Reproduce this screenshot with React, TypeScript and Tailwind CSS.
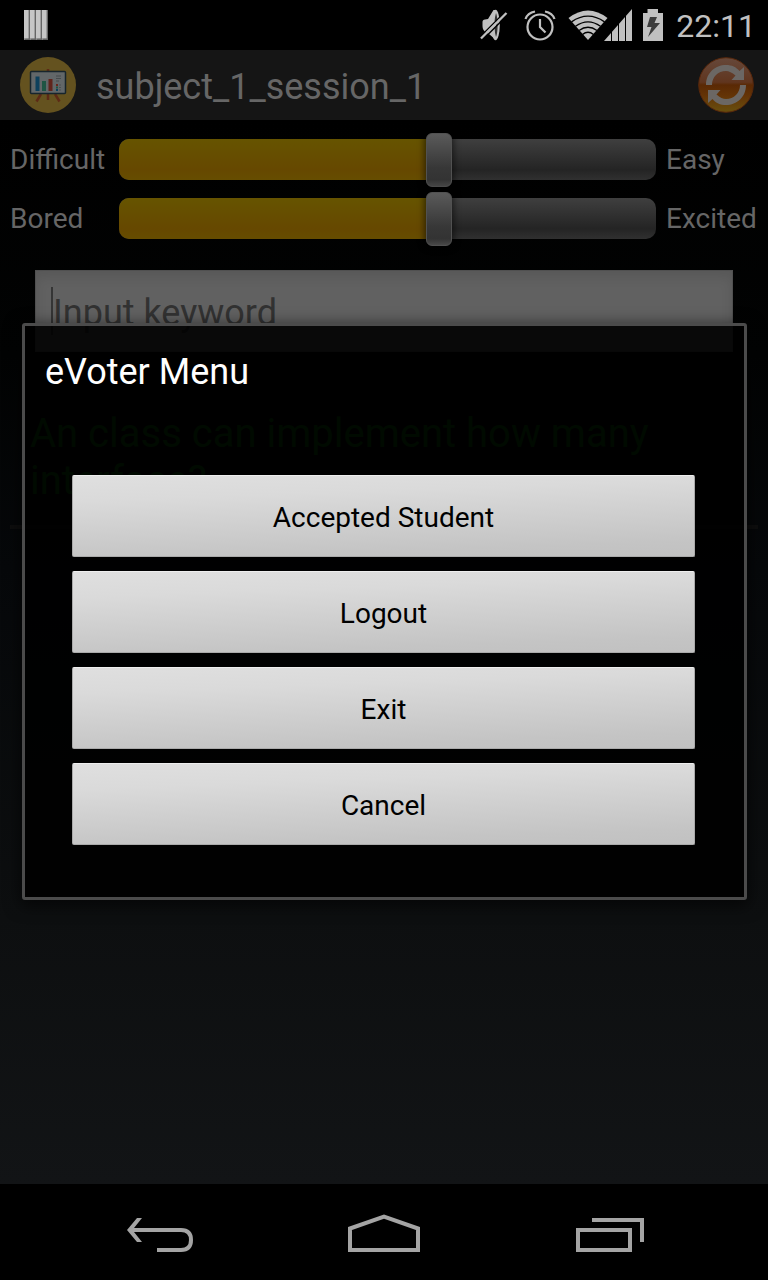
import { useState } from 'react';

function NotificationIcon() {
  return (
    <svg width="24" height="30" viewBox="0 0 24 30" aria-hidden="true">
      {[0, 6, 12, 18].map((x) => (
        <g key={x}>
          <rect x={x} y="0" width="6" height="30" fill="#666" />
          <rect x={x} y="0" width="4.6" height="28.4" fill="#c6c6c6" />
          <path d={`M${x} 30L${x + 1.5} 28.4H${x}z`} fill="#aaa" />
        </g>
      ))}
    </svg>
  );
}

function MutedIcon() {
  return (
    <svg width="28" height="34" viewBox="0 0 28 34" aria-hidden="true">
      <path d="M2.500 14Q2.500 11.500 5 11.500L8 11L13.500 2H16V32L9 26L6 24.500Q2.500 22 2.500 18z" fill="#c0c0c0" />
      <ellipse cx="15.500" cy="17" rx="4.300" ry="15.300" fill="#c0c0c0" />
      <path d="M16 5Q17.600 9 17.600 17Q17.600 25 16 29Q14.800 25 14.600 20L16 19V14L14.600 13Q14.800 9 16 5z" fill="#333" />
      <path d="M0 29L26 3" stroke="#000" strokeWidth="1.500" />
      <path d="M1 30.500L26.500 5" stroke="#c0c0c0" strokeWidth="2.400" />
      <path d="M2.500 32L28 6.500" stroke="#000" strokeWidth="1.500" />
    </svg>
  );
}

function AlarmIcon() {
  return (
    <svg width="32" height="32" viewBox="0 0 32 32" fill="none" stroke="#c0c0c0" strokeWidth="2.200" aria-hidden="true">
      <circle cx="16" cy="18" r="12.500" />
      <path d="M16 10V18L21.500 23.500M1.500 10Q3.500 4 11 2.500M30.500 10Q28.500 4 21 2.500" />
    </svg>
  );
}

function WifiIcon() {
  return (
    <svg width="40" height="32" viewBox="0 0 40 32" aria-hidden="true">
      <path d="M0.500 9Q20 -6 39.500 9L20 31z" fill="#c0c0c0" />
      <g fill="none" stroke="#000" strokeWidth="1.400">
        <path d="M3.500 12.800Q20 1.500 36.500 12.800" />
        <path d="M7.500 17.300Q20 8.500 32.500 17.300" />
        <path d="M11 21.500Q20 15 29 21.500" />
        <path d="M14.500 25.500Q20 21 25.500 25.500" />
      </g>
    </svg>
  );
}

function SignalIcon() {
  return (
    <svg width="28" height="32" viewBox="0 0 28 32" aria-hidden="true">
      <path d="M0 32L28 0V32z" fill="#c0c0c0" />
      <path d="M7.500 0V32M14.500 0V32M21.500 0V32" stroke="#000" strokeWidth="1" />
    </svg>
  );
}

function BatteryIcon() {
  return (
    <svg width="22" height="32" viewBox="0 0 22 32" aria-hidden="true">
      <path d="M5.500 0H16V4H21V32H1V4H5.500z" fill="#c0c0c0" />
      <path d="M8 8H15L12.500 14H18L6 28L9.500 18H5z" fill="#3c3c3c" />
    </svg>
  );
}

function BoardIcon() {
  return (
    <svg width="56" height="56" viewBox="0 0 56 56" aria-hidden="true">
      <circle cx="28" cy="28" r="28" fill="#64521f" />
      <path d="M28 12V15M28 37V43M21 37L16.500 44.500M35 37L39.500 44.500" stroke="#5d2a16" strokeWidth="2.500" />
      <rect x="10.500" y="14.500" width="35" height="22" rx="1" fill="#626769" stroke="#17252d" strokeWidth="1.500" />
      <path d="M17.500 34V19.500" stroke="#0d405c" strokeWidth="4" />
      <path d="M24 34V24" stroke="#1e5544" strokeWidth="4" />
      <path d="M30.500 34V22" stroke="#60251d" strokeWidth="4" />
      <path d="M36 19H41M36 21.500H41M36 24H39" stroke="#454b4d" strokeWidth="1" />
      <path d="M36 28H38" stroke="#6b251d" strokeWidth="2" />
      <path d="M36 30.500H38" stroke="#1e5544" strokeWidth="2" />
      <path d="M36 33H38" stroke="#0d405c" strokeWidth="2" />
      <path d="M39 28H41M39 30.500H41M39 33H41" stroke="#4b5052" strokeWidth="1" />
    </svg>
  );
}

function RefreshIcon() {
  return (
    <svg width="56" height="56" viewBox="0 0 56 56" aria-hidden="true">
      <defs>
        <linearGradient id="orb" x1="0" y1="0" x2="0" y2="1">
          <stop offset="0" stopColor="#66483a" />
          <stop offset="0.450" stopColor="#60351e" />
          <stop offset="0.500" stopColor="#5a2904" />
          <stop offset="0.700" stopColor="#643406" />
          <stop offset="1" stopColor="#68500e" />
        </linearGradient>
      </defs>
      <circle cx="28" cy="28" r="27.300" fill="url(#orb)" stroke="#58270b" strokeWidth="1" />
      <g fill="#6b6764">
        <path d="M8 28C8 16 17 8 28 8C34 8 38 10 41.500 14L46 10V23H33.500L37.500 18.500C34 15.500 31 14 28 14C20 14 14 20 14 28z" />
        <path d="M48 28C48 40 39 48 28 48C22 48 18 46 14.500 42L10 46V33H22.500L18.500 37.500C22 40.500 25 42 28 42C36 42 42 36 42 28z" />
      </g>
    </svg>
  );
}

function RatingSlider({ low, high }: { low: string; high: string }) {
  const [value, setValue] = useState(60);
  return (
    <div className="grid h-[59px] grid-cols-[99px_1fr_92px] items-center gap-x-[10px] text-[28px] text-[#666]">
      <span>{low}</span>
      <div className="grid items-center">
        <div className="col-start-1 row-start-1 h-[41px] overflow-hidden rounded-[10px] bg-[linear-gradient(#3f3f3f,#242424_75%,#303030)]">
          <div
            className="h-full bg-[linear-gradient(#665400,#664800_75%,#664d00)]"
            style={{ width: `${value}%` }}
          />
        </div>
        <input
          type="range"
          aria-label={`${low} to ${high}`}
          value={value}
          onChange={(e) => setValue(Number(e.target.value))}
          className="z-0 col-start-1 row-start-1 h-[54px] w-full appearance-none bg-transparent [&::-webkit-slider-thumb]:h-[54px] [&::-webkit-slider-thumb]:w-[26px] [&::-webkit-slider-thumb]:appearance-none [&::-webkit-slider-thumb]:rounded-[6px] [&::-webkit-slider-thumb]:border [&::-webkit-slider-thumb]:border-[#515151] [&::-webkit-slider-thumb]:bg-[linear-gradient(#5a5a5a,#373737_65%,#333_88%,#484848)] [&::-webkit-slider-thumb]:shadow-[0_0_6px_2px_rgba(0,0,0,0.5)]"
        />
      </div>
      <span>{high}</span>
    </div>
  );
}

const menuItems = ['Accepted Student', 'Logout', 'Exit', 'Cancel'];

export default function App() {
  return (
    <div className="flex min-h-screen flex-col bg-black font-['Roboto',sans-serif]">
      <header className="flex h-[50px] items-center justify-between pr-3 pl-6">
        <NotificationIcon />
        <div className="flex items-center">
          <MutedIcon />
          <span className="ml-4"><AlarmIcon /></span>
          <span className="ml-3"><WifiIcon /></span>
          <span className="-ml-1"><SignalIcon /></span>
          <span className="ml-[10px]"><BatteryIcon /></span>
          <span className="ml-3 pt-[2px] text-[32px] leading-[48px] text-[#c0c0c0]">22:11</span>
        </div>
      </header>

      <div className="relative flex flex-1 flex-col">
        <div className="flex h-[70px] items-center bg-[#151515] pr-[14px] pl-5">
          <BoardIcon />
          <h1 className="ml-5 flex-1 pt-1 text-[36px] text-[#666]">subject_1_session_1</h1>
          <button type="button" aria-label="Refresh">
            <RefreshIcon />
          </button>
        </div>

        <main className="flex-1 bg-[linear-gradient(#000,#020303_22%,#06080a_42%,#0d0f10_75%,#121416)] px-[10px] pt-[10px]">
          <RatingSlider low="Difficult" high="Easy" />
          <RatingSlider low="Bored" high="Excited" />
          <div className="mx-[25px] mt-[22px] flex h-[82px] items-center border border-[#505050] bg-[#616161] pl-[15px] shadow-[inset_0_6px_12px_rgba(0,0,0,0.1)]">
            <span className="h-12 w-[2px] bg-[#353535]" />
            <input
              type="text"
              aria-label="Keyword"
              placeholder="Input keyword"
              className="min-w-0 flex-1 bg-transparent pt-1 text-[36px] text-black outline-none placeholder:text-[#323232]"
            />
          </div>
          <p className="mt-[58px] px-5 text-[40px] leading-[47px] text-[#006600]">
            An class can implement how many interface?
          </p>
          <hr className="mt-[21px] border-t-4 border-[#0e0e0e]" />
        </main>

        <div className="absolute inset-0 flex items-center pr-[21px] pb-[11px] pl-[22px]">
          <section
            role="dialog"
            aria-labelledby="menu-title"
            className="w-full rounded-[3px] border-[3px] border-[#4b4b4b] bg-black/90 pr-[49px] pb-[52px] pl-[47px] shadow-[0_4px_16px_2px_rgba(0,0,0,0.6)]"
          >
            <h2 id="menu-title" className="-ml-[27px] pt-[22px] text-[36px] leading-[48px] text-white">
              eVoter Menu
            </h2>
            <div className="mt-[79px] flex flex-col gap-[14px]">
              {menuItems.map((item) => (
                <button
                  key={item}
                  type="button"
                  className="h-[82px] w-full rounded-[2px] border border-[#aaa] border-t-[#eee] bg-[linear-gradient(178deg,#dfdfdf,#dadada_25%,#c4c4c4_85%,#c1c1c1)] pt-1 text-[28px] text-black"
                >
                  {item}
                </button>
              ))}
            </div>
          </section>
        </div>
      </div>

      <nav className="flex h-24 items-center justify-center gap-[136px]">
        <button type="button" aria-label="Back">
          <svg width="88" height="48" viewBox="116 1208 88 48" fill="none" stroke="#a4a4a4" strokeWidth="4" aria-hidden="true">
            <path d="M130 1230H181Q191 1230 191 1240Q191 1250 181 1250H157" />
            <path d="M127 1230L137 1218H142L134 1228V1232L142 1242H137z" fill="#a4a4a4" stroke="none" />
          </svg>
        </button>
        <button type="button" aria-label="Home">
          <svg width="88" height="48" viewBox="340 1208 88 48" fill="none" stroke="#a4a4a4" strokeWidth="4" aria-hidden="true">
            <path d="M350 1250V1228.500L384 1216.500L418 1228.500V1250z" />
          </svg>
        </button>
        <button type="button" aria-label="Recent apps">
          <svg width="88" height="48" viewBox="564 1208 88 48" fill="none" stroke="#a4a4a4" strokeWidth="4" aria-hidden="true">
            <path d="M578 1230H630V1250H578zM592 1220H642V1242" />
          </svg>
        </button>
      </nav>
    </div>
  );
}
